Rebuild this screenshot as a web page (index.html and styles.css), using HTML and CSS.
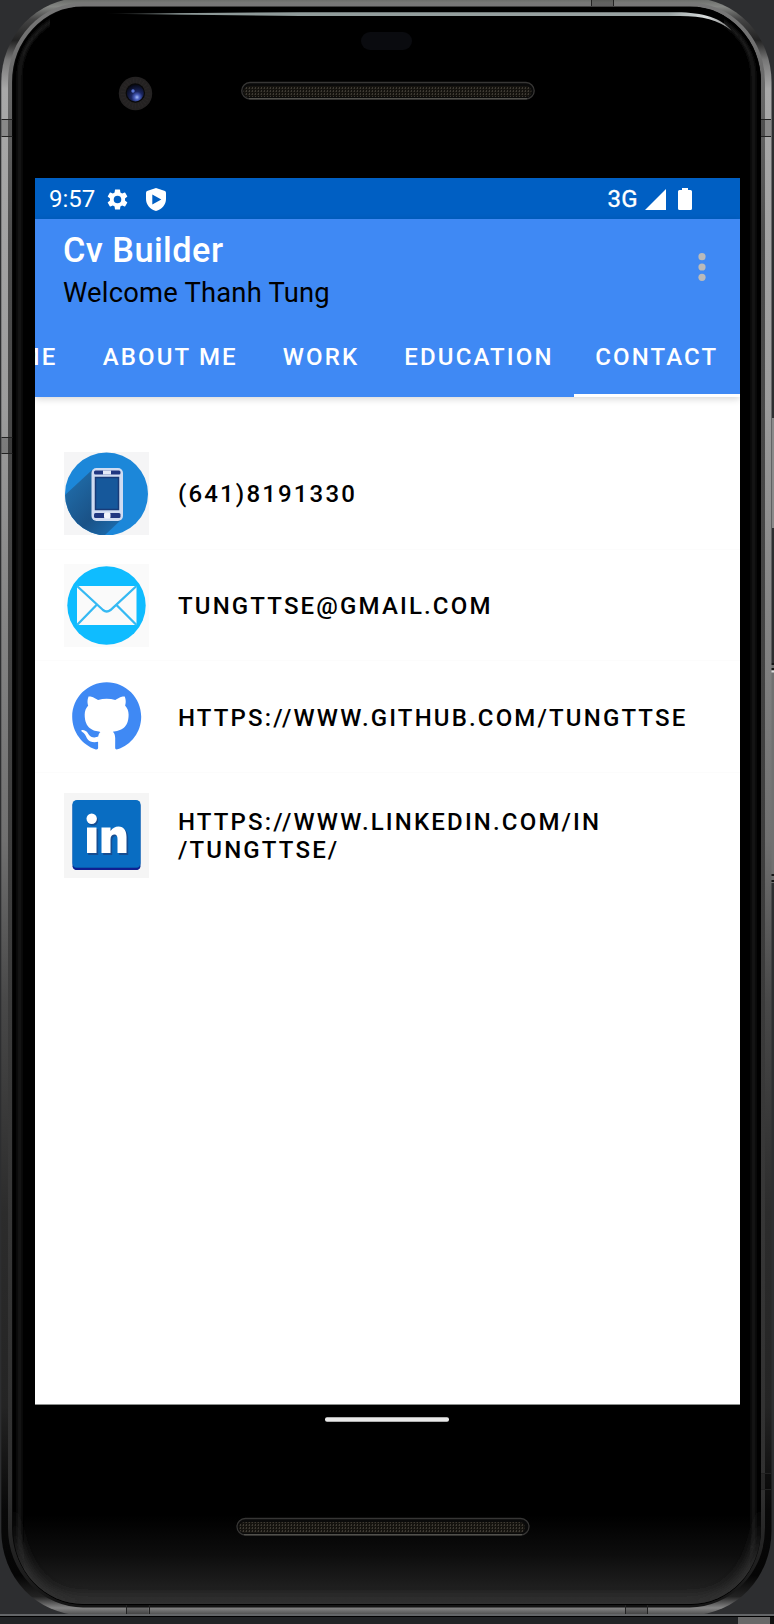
FILE: index.html
```html
<!DOCTYPE html>
<html lang="en">
<head>
<meta charset="utf-8">
<title>Cv Builder</title>
<link rel="stylesheet" href="styles.css">
</head>
<body>
<svg class="device" viewBox="0 0 774 1624" width="774" height="1624" aria-hidden="true">
  <defs>
    <linearGradient id="metal" gradientUnits="userSpaceOnUse" x1="0" y1="0" x2="0" y2="1616">
      <stop offset="0" stop-color="#6c6e6b"/><stop offset=".004" stop-color="#858784"/><stop offset=".012" stop-color="#444"/>
      <stop offset=".025" stop-color="#222"/><stop offset=".037" stop-color="#777"/>
      <stop offset=".055" stop-color="#a8a8a8"/><stop offset=".25" stop-color="#9c9c9c"/>
      <stop offset=".38" stop-color="#858585"/><stop offset=".52" stop-color="#707070"/><stop offset=".62" stop-color="#484848"/>
      <stop offset=".75" stop-color="#2c2c2c"/><stop offset=".87" stop-color="#242424"/>
      <stop offset=".935" stop-color="#080808"/><stop offset=".975" stop-color="#050505"/><stop offset=".988" stop-color="#222"/>
      <stop offset=".995" stop-color="#858585"/><stop offset="1" stop-color="#444"/>
    </linearGradient>
    <linearGradient id="rim" x1="0" y1="0" x2="0" y2="1">
      <stop offset="0" stop-color="#777"/><stop offset=".06" stop-color="#666"/><stop offset=".15" stop-color="#4c4c4c"/>
      <stop offset=".6" stop-color="#3c3c3c"/><stop offset=".93" stop-color="#303030"/><stop offset="1" stop-color="#151515"/>
    </linearGradient>
    <linearGradient id="chin" x1="0" y1="0" x2="0" y2="1">
      <stop offset="0" stop-color="#000"/><stop offset=".45" stop-color="#0d0d0d"/><stop offset=".82" stop-color="#1f1f1f"/><stop offset="1" stop-color="#303030"/>
    </linearGradient>
    <linearGradient id="shine" x1="0" y1="0" x2="1" y2="0">
      <stop offset="0" stop-color="#9aa5a5" stop-opacity="0"/><stop offset=".12" stop-color="#8d9998"/><stop offset=".9" stop-color="#9aa3a3"/><stop offset=".96" stop-color="#d9dddd"/><stop offset="1" stop-color="#777"/>
    </linearGradient>
    <radialGradient id="lens" cx=".6" cy=".75" r=".75">
      <stop offset="0" stop-color="#a5bcf8"/><stop offset=".2" stop-color="#4a60bd"/><stop offset=".45" stop-color="#1a255e"/><stop offset="1" stop-color="#060814"/>
    </radialGradient>
    <pattern id="mesh" width="3" height="3" patternUnits="userSpaceOnUse">
      <rect width="3" height="3" fill="#15130f"/><rect width="1" height="2" fill="#3e3a33"/><rect x="2" y="1" width="1" height="1" fill="#29261f"/>
    </pattern>
    <filter id="soft"><feGaussianBlur stdDeviation="1.6"/></filter>
    <filter id="softer"><feGaussianBlur stdDeviation="6"/></filter>
    <clipPath id="glass"><rect x="13" y="7" width="748" height="1597" rx="70" ry="75"/></clipPath>
  </defs>
  <rect width="774" height="1624" fill="#2d2e30"/>
  <rect x="772" y="418" width="2" height="110" fill="#8a8a8a"/>
  <rect x="771" y="663" width="3" height="220" fill="#707070"/>
  <path d="M771 664h3M771 669h3M771 875h3M771 881h3" stroke="#151515" stroke-width="2"/>
  <path d="M771 671.5h3" stroke="#ddd" stroke-width="2"/>
  <rect x="1.300" y="-2" width="770.200" height="1617" rx="80" ry="84" fill="url(#metal)"/>
  <rect x="10" y="4.500" width="753" height="1601" rx="73" ry="78" fill="#080808" stroke="url(#rim)" stroke-width="4"/>
  <rect x="13" y="7" width="748" height="1598" rx="70" ry="75" fill="#000"/>
  <g clip-path="url(#glass)">
    <rect x="19.500" y="13" width="734" height="1584" rx="64" fill="none" stroke="#1b1b1b" stroke-width="4" filter="url(#soft)"/>
    <rect x="50" y="0" width="674" height="45" fill="#000"/>
    <rect x="24" y="1515" width="726" height="89" fill="url(#chin)"/>
    <path d="M13 1490V1604H761V1490C761 1560 735 1598 690 1598H85C40 1598 13 1560 13 1490Z" fill="#303030" filter="url(#softer)"/>
  </g>
  <g fill="#000" fill-opacity=".18">
    <path d="M1 119.500h12v17H1zM761 119.500h10v17h-10zM1 437.500h12v16H1zM761 1473.500h10v16h-10zM591.500 0h22v6h-22zM126.500 1605h22v9h-22zM625.500 1605h22v9h-22z"/>
  </g>
  <path d="M1.500 119.500h11M1.500 136.500h11M761 119.500h10M761 136.500h10M1.500 437.500h11M1.500 453.500h11M761 1473.500h10M761 1489.500h10M591.500 0v6M613.500 0v6M126.500 1605v9M149.500 1605v9M625.500 1605v9M647.500 1605v9" stroke="#222"/>
  <path d="M104 13.800L300 12.200H675C703 12 721 18 731.500 30.500C718 20 703 16 680 16H300Z" fill="url(#shine)"/>
  <rect x="361" y="32" width="51" height="18" rx="9" fill="#0a0b0f"/>
  <circle cx="135.500" cy="93.500" r="16.700" fill="#242222"/>
  <circle cx="135.500" cy="93.500" r="12" fill="none" stroke="#2a2727" stroke-dasharray="1 2" stroke-width="6"/>
  <circle cx="135.300" cy="93" r="9.700" fill="#080808"/>
  <circle cx="135.300" cy="93" r="8.500" fill="url(#lens)"/>
  <circle cx="133" cy="91" r="1.700" fill="#5a75d4"/>
  <g fill="#0a0a0a" stroke="#373635" stroke-width="1.300">
    <rect x="241.700" y="82.500" width="292.500" height="16.500" rx="8.250"/>
    <rect x="237" y="1518.500" width="292" height="16.500" rx="8.250"/>
  </g>
  <rect x="243.500" y="86" width="288" height="11" rx="5.500" fill="url(#mesh)"/>
  <rect x="239" y="1522" width="286" height="11" rx="5.500" fill="url(#mesh)"/>
  <path d="M249 98.700H527M244 1534.700H522" stroke="#5c5b55"/>
  <rect y="1614" width="774" height="2" fill="#646668"/>
  <rect y="1616" width="774" height="1" fill="#000"/>
  <rect y="1617" width="774" height="7" fill="#212325"/>
  <rect x="738" y="1617" width="32" height="7" fill="#686868"/>
  <rect x="770" y="1617" width="4" height="7" fill="#111"/>
  <rect x="325" y="1417.300" width="124" height="4.400" rx="2" fill="#e9e9e9"/>
</svg>

<main class="screen">
  <div class="status">
    <span class="clock">9:57</span>
    <svg class="gear" viewBox="2 2 20 20"><path fill="#fff" fill-rule="evenodd" d="M19.140 12.940c.04-.3.06-.61.06-.94 0-.32-.02-.64-.07-.94l2.030-1.580a.49.49 0 0 0 .12-.61l-1.920-3.320a.488.488 0 0 0-.59-.22l-2.390.96c-.5-.38-1.030-.7-1.620-.94l-.36-2.540a.484.484 0 0 0-.48-.41h-3.840c-.24 0-.43.17-.47.41l-.36 2.540c-.59.24-1.130.57-1.620.94l-2.390-.96c-.22-.08-.47 0-.59.22L2.740 8.870c-.12.21-.08.47.12.61l2.030 1.580c-.05.3-.09.63-.09.94s.02.64.07.94l-2.030 1.580a.49.49 0 0 0-.12.61l1.920 3.320c.12.22.37.29.59.22l2.390-.96c.5.38 1.030.7 1.620.94l.36 2.540c.05.24.24.41.48.41h3.840c.24 0 .44-.17.47-.41l.36-2.540c.59-.24 1.130-.56 1.620-.94l2.390.96c.22.08.47 0 .59-.22l1.920-3.320c.12-.22.07-.47-.12-.61zM12 15.600A3.600 3.600 0 1 1 12 8.400a3.600 3.600 0 0 1 0 7.200z"/></svg>
    <svg class="shield" viewBox="0 0 20 23"><path fill="#fff" fill-rule="evenodd" d="M10 0L19 3Q20 3.400 20 5V11C20 16.500 16 21.300 10 23C4 21.300 0 16.500 0 11V5Q0 3.400 1 3ZM6.300 6.500V16.500L15.300 11.500Z"/></svg>
    <span class="network">3G</span>
    <svg class="signal" viewBox="0 0 21 21"><path fill="#fff" d="M21 0V21H0Z"/></svg>
    <svg class="battery" viewBox="0 0 14 22"><path fill="#fff" d="M4 0H10V2H12.500Q14 2 14 3.500V20.500Q14 22 12.500 22H1.500Q0 22 0 20.500V3.500Q0 2 1.500 2H4Z"/></svg>
  </div>
  <header class="appbar">
    <div class="heading">
      <div class="titles">
        <h1 class="title">Cv Builder</h1>
        <p class="welcome">Welcome Thanh Tung</p>
      </div>
      <svg class="more" viewBox="0 0 8 28"><g fill="#bababa"><circle cx="4" cy="3.700" r="3.600"/><circle cx="4" cy="14" r="3.600"/><circle cx="4" cy="24.300" r="3.600"/></g></svg>
    </div>
    <nav class="tabs">
      <a class="tab tab-home">HOME</a>
      <a class="tab tab-about">ABOUT ME</a>
      <a class="tab tab-work">WORK</a>
      <a class="tab tab-education">EDUCATION</a>
      <a class="tab tab-contact">CONTACT</a>
    </nav>
  </header>
  <ul class="contacts">
    <li class="contact">
      <svg class="icon" viewBox="0 0 85 83">
        <defs><clipPath id="disc"><circle cx="42.500" cy="42" r="41.500"/></clipPath>
        <linearGradient id="shade" x1="0" y1="0" x2="1" y2="1"><stop offset="0" stop-color="#2173b2"/><stop offset=".6" stop-color="#1a5287"/><stop offset="1" stop-color="#1c72b8"/></linearGradient></defs>
        <rect width="85" height="83" fill="#f5f5f6"/>
        <circle cx="42.500" cy="42" r="41.500" fill="#1c87d9"/>
        <path clip-path="url(#disc)" d="M28 18L0 44V83H41L58 67Z" fill="url(#shade)"/>
        <rect x="27.500" y="16" width="31.500" height="53" rx="5" fill="#d0dcf2"/>
        <rect x="30" y="18.500" width="26.500" height="4" rx="1.500" fill="#203781"/><rect x="39" y="18.500" width="8" height="4" fill="#e4e9f6"/>
        <rect x="31.500" y="25.500" width="23" height="32" fill="#16589b" stroke="#183b78" stroke-width="1.500"/>
        <rect x="30" y="61" width="26.500" height="5" rx="1.500" fill="#203781"/><rect x="40" y="60.500" width="6.500" height="6" rx="1.500" fill="#f2f5fb"/>
      </svg>
      <span class="label">(641)8191330</span>
    </li>
    <li class="contact">
      <svg class="icon" viewBox="0 0 85 83">
        <rect width="85" height="83" fill="#fafafa"/><circle cx="42.500" cy="41.500" r="39.200" fill="#0fbcff"/>
        <rect x="13" y="22" width="59.500" height="39" fill="#fafafa"/>
        <path d="M13 22L39 46Q42.700 49 46.500 46L72.500 22M13 61L32.500 41M72.500 61L52.500 41" fill="none" stroke="#35b9f3" stroke-width="2.300"/>
      </svg>
      <span class="label">TUNGTTSE@GMAIL.COM</span>
    </li>
    <li class="contact">
      <svg class="icon" viewBox="0 0 85 83"><path transform="translate(8.200 6.300) scale(2.875)" fill="#3f89f4" d="M12 .297c-6.630 0-12 5.373-12 12 0 5.303 3.438 9.800 8.205 11.385.6.113.82-.258.82-.577 0-.285-.01-1.040-.015-2.040-3.338.724-4.042-1.610-4.042-1.610C4.422 18.070 3.633 17.700 3.633 17.700c-1.087-.744.084-.729.084-.729 1.205.084 1.838 1.236 1.838 1.236 1.070 1.835 2.809 1.305 3.495.998.108-.776.417-1.305.76-1.605-2.665-.3-5.466-1.332-5.466-5.930 0-1.310.465-2.380 1.235-3.220-.135-.303-.54-1.523.105-3.176 0 0 1.005-.322 3.300 1.230.96-.267 1.980-.399 3-.405 1.020.006 2.040.138 3 .405 2.280-1.552 3.285-1.230 3.285-1.230.645 1.653.24 2.873.12 3.176.765.840 1.230 1.910 1.230 3.220 0 4.610-2.805 5.625-5.475 5.920.42.360.81 1.096.81 2.220 0 1.606-.015 2.896-.015 3.286 0 .315.210.690.825.570C20.565 22.092 24 17.592 24 12.297c0-6.627-5.373-12-12-12"/></svg>
      <span class="label">HTTPS://WWW.GITHUB.COM/TUNGTTSE</span>
    </li>
    <li class="contact contact-tall">
      <svg class="icon icon-square" viewBox="0 0 85 85">
        <rect width="85" height="85" fill="#f5f5f5"/>
        <rect x="8.500" y="8" width="68" height="69" rx="4.500" fill="#08449d"/>
        <rect x="8.500" y="7" width="68" height="67.500" rx="4.500" fill="#096dc2"/>
        <path d="M8.500 73Q9 77 13 77H72Q76 77 76.500 73L74 75H11Z" fill="#101f91"/>
        <g fill="#174d91" transform="translate(1.200 1.500)"><circle cx="27.700" cy="26" r="5.200"/><path d="M23 34.500H33V60.500H23ZM38 34.500H47V38Q50 33.500 55 33.500C60.500 33.500 63 38 63 44V60.500H54V46Q54 41 50.500 41.500Q47 42 47 46.500V60.500H38Z"/></g>
        <g fill="#fff"><circle cx="27.700" cy="25.700" r="5.200"/><path d="M23 34.500H32.500V60H23ZM37.500 34.500H46.500V38Q49.500 33.500 54.500 33.500C60 33.500 62.500 38 62.500 44V60H53.500V46Q53.500 41 50 41.500Q46.500 42 46.500 46.500V60H37.500Z"/></g>
      </svg>
      <span class="label">HTTPS://WWW.LINKEDIN.COM/IN<br>/TUNGTTSE/</span>
    </li>
  </ul>
</main>
</body>
</html>
```
FILE: styles.css
```css
* { box-sizing: border-box; }
body {
  margin: 0;
  width: 774px;
  height: 1624px;
  padding: 178px 34px 0 35px;
  overflow: hidden;
  position: relative;
  background: #2d2e30;
  font-family: Roboto, sans-serif;
}
svg { display: block; flex: none; }
.device { position: absolute; left: 0; top: 0; }
.screen {
  position: relative;
  width: 705px;
  height: 1227px;
  overflow: hidden;
  background: #fff;
  border-bottom: 1px solid #8c8f8d;
}
.status {
  display: flex;
  align-items: center;
  height: 41px;
  padding: 1px 48px 0 14px;
  background: #005fc3;
  color: #fff;
  font-size: 24px;
}
.clock { width: 58px; }
.gear { width: 21px; height: 21px; }
.shield { width: 20px; height: 23px; margin-left: 17.500px; }
.network { margin-left: auto; -webkit-text-stroke: .35px #fff; letter-spacing: .3px; }
.signal { width: 21px; height: 21px; margin-left: 7px; }
.battery { width: 14px; height: 22px; margin-left: 12px; }
.appbar {
  position: relative;
  height: 178px;
  display: flex;
  flex-direction: column;
  background: #3f89f4;
  box-shadow: 0 2px 7px rgba(0, 0, 0, .16);
}
.heading {
  display: flex;
  justify-content: space-between;
  height: 96px;
  padding: 10px 33.700px 0 28px;
}
.title { margin: 0; color: #fff; font-size: 34.3px; line-height: 42px; font-weight: 500; letter-spacing: .45px; }
.welcome { margin: 0; padding-top: 1px; color: #000; font-size: 27.4px; line-height: 42px; letter-spacing: .2px; }
.more { width: 8px; height: 28px; margin-top: 24px; }
.tabs { display: flex; justify-content: flex-end; height: 82px; }
.tab {
  flex: none;
  display: flex;
  justify-content: center;
  padding-top: 28px;
  color: #fff;
  font-size: 24px;
  line-height: 28px;
  font-weight: 500;
  letter-spacing: 2.14px;
}
.tab-home { width: 128px; }
.tab-about { width: 174.500px; }
.tab-work { width: 127px; }
.tab-education { width: 189px; }
.tab-contact { width: 166.500px; border-bottom: 3px solid #fff; }
.contacts { margin: 0; padding: 41px 0 0; list-style: none; }
.contact {
  display: flex;
  align-items: center;
  gap: 29px;
  height: 111.7px;
  padding-left: 29px;
  border-bottom: 1px solid #fcfcfc;
}
.contact-tall { height: 124.500px; border: 0; }
.icon { width: 85px; height: 83px; }
.icon-square { height: 85px; }
.label {
  padding-top: 2px;
  color: #000;
  font-size: 24px;
  line-height: 28px;
  font-weight: 500;
  letter-spacing: 2.16px;
  white-space: nowrap;
}
.contact-tall .label { padding-top: 1px; }
```
